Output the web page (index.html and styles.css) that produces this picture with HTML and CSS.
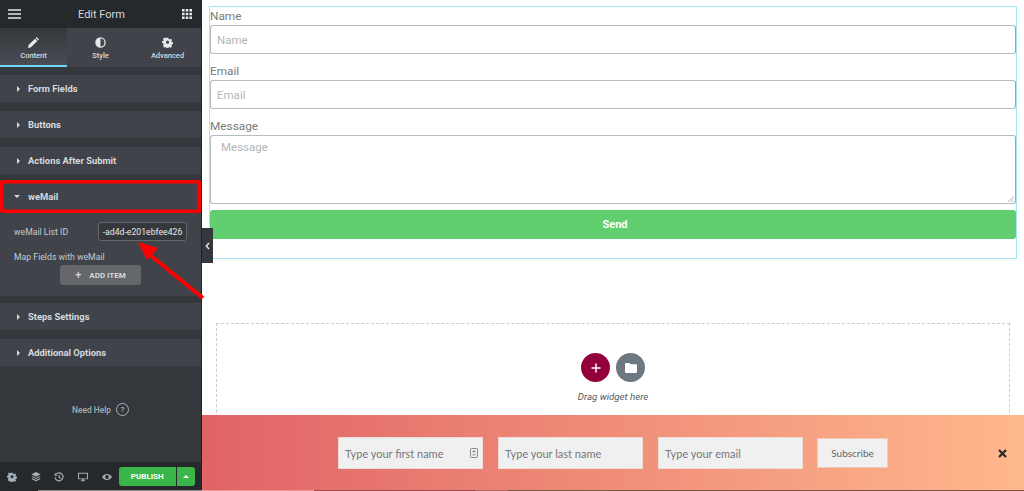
FILE: index.html
```html
<!DOCTYPE html>
<html lang="en">
<head>
<meta charset="utf-8">
<title>Edit Form</title>
<link rel="stylesheet" href="styles.css">
</head>
<body>
<div class="app">
  <aside class="panel">
    <header class="panel-head">
      <svg class="head-icon" viewBox="0 0 13 10"><path d="M0 1h13M0 5h13M0 9h13" stroke="#e6e8ea" stroke-width="1.6"/></svg>
      <span class="head-title">Edit Form</span>
      <svg class="head-icon grid" viewBox="0 0 10 10"><path fill="#e6e8ea" d="M0 0h2.6v2.6H0zM3.7 0h2.6v2.6H3.7zM7.4 0H10v2.6H7.4zM0 3.7h2.6v2.6H0zM3.7 3.7h2.6v2.6H3.7zM7.4 3.7H10v2.6H7.4zM0 7.4h2.6V10H0zM3.7 7.4h2.6V10H3.7zM7.4 7.4H10V10H7.4z"/></svg>
    </header>
    <nav class="tabs">
      <div class="tab active">
        <svg class="tab-icon" viewBox="0 0 12 12"><path fill="#e6e8ea" d="M0 12l.7-3.3L7.6 1.8l2.6 2.6-6.9 6.9zM8.3 1.1L9.4 0 12 2.6l-1.1 1.1z"/></svg>
        <span>Content</span>
      </div>
      <div class="tab">
        <svg class="tab-icon" viewBox="0 0 12 12"><circle cx="6" cy="6" r="5" fill="none" stroke="#e6e8ea" stroke-width="1.4"/><path fill="#e6e8ea" d="M6 1a5 5 0 0 0 0 10z"/></svg>
        <span>Style</span>
      </div>
      <div class="tab">
        <svg class="tab-icon" viewBox="0 0 12 12"><path fill="#e6e8ea" fill-rule="evenodd" d="M4.9.5h2.2l.3 1.6 1.1.5 1.4-.9 1.5 1.6-.9 1.3.5 1.1 1.5.3v2.2l-1.5.3-.5 1.1.9 1.4-1.5 1.5-1.4-.9-1.1.5-.3 1.5H4.9l-.3-1.5-1.1-.5-1.4.9L.6 9.6l.9-1.4-.5-1.1L-.5 6.8V4.6L1 4.3l.5-1.1-.9-1.3L2.1.3l1.4.9 1.1-.5zM6 3.9a1.9 1.9 0 1 0 0 3.8 1.9 1.9 0 0 0 0-3.8z" transform="translate(.5 .3) scale(.92)"/></svg>
        <span>Advanced</span>
      </div>
    </nav>
    <div class="sections">
      <div class="section"><i class="caret"></i>Form Fields</div>
      <div class="section"><i class="caret"></i>Buttons</div>
      <div class="section"><i class="caret"></i>Actions After Submit</div>
      <div class="section open"><i class="caret down"></i>weMail</div>
      <div class="section-body">
        <div class="field-row">
          <span>weMail List ID</span>
          <span class="id-input">-ad4d-e201ebfee426</span>
        </div>
        <div class="map-label">Map Fields with weMail</div>
        <button class="add-item"><b class="plus">+</b>ADD ITEM</button>
      </div>
      <div class="section"><i class="caret"></i>Steps Settings</div>
      <div class="section"><i class="caret"></i>Additional Options</div>
    </div>
    <div class="help">
      <span>Need Help</span>
      <span class="help-q">?</span>
    </div>
    <footer class="panel-foot">
      <svg class="foot-icon" viewBox="0 0 12 12"><path fill="#a4afb7" fill-rule="evenodd" d="M4.9.5h2.2l.3 1.6 1.1.5 1.4-.9 1.5 1.6-.9 1.3.5 1.1 1.5.3v2.2l-1.5.3-.5 1.1.9 1.4-1.5 1.5-1.4-.9-1.1.5-.3 1.5H4.9l-.3-1.5-1.1-.5-1.4.9L.6 9.6l.9-1.4-.5-1.1L-.5 6.8V4.6L1 4.3l.5-1.1-.9-1.3L2.1.3l1.4.9 1.1-.5zM6 3.9a1.9 1.9 0 1 0 0 3.8 1.9 1.9 0 0 0 0-3.8z" transform="translate(.5 .3) scale(.92)"/></svg>
      <svg class="foot-icon" viewBox="0 0 12 12"><path fill="#a4afb7" d="M6 0l5.5 2.8L6 5.6.5 2.800zM1.800 5L6 7.100 10.200 5l1.300.7L6 8.500.5 5.700zM1.800 7.600L6 9.700l4.200-2.100 1.300.7L6 11.100.5 8.300z"/></svg>
      <svg class="foot-icon" viewBox="0 0 12 12"><path fill="none" stroke="#a4afb7" stroke-width="1.500" d="M2.500 2.500A4.800 4.800 0 1 1 1.300 6.500M6.200 3.500v3l2 1.200"/><path fill="#a4afb7" d="M.8 1v3.500h3.500z"/></svg>
      <svg class="foot-icon" viewBox="0 0 12 12"><path fill="#a4afb7" d="M0 1h12v7.800H0zM1.200 2.100v5.600h9.600V2.100zM4.800 8.800h2.400v1.400h1.500v1H3.300v-1h1.500z"/></svg>
      <svg class="foot-icon" viewBox="0 0 12 12"><path fill="#a4afb7" fill-rule="evenodd" d="M0 6c1.500-2.400 3.500-3.600 6-3.600S10.500 3.600 12 6c-1.500 2.400-3.500 3.600-6 3.600S1.500 8.400 0 6zm6-2.300a2.300 2.300 0 1 0 0 4.600 2.300 2.300 0 0 0 0-4.600z"/></svg>
      <div class="publish">
        <span class="publish-main">PUBLISH</span>
        <span class="publish-more"><i class="caret-up"></i></span>
      </div>
    </footer>
  </aside>
  <main class="canvas">
    <form class="form-box">
      <div class="form-label">Name</div>
      <div class="form-input">Name</div>
      <div class="form-label">Email</div>
      <div class="form-input">Email</div>
      <div class="form-label">Message</div>
      <div class="form-input area">Message
        <svg class="grip" viewBox="0 0 8 8"><path d="M8 1L1 8M8 4L4 8M8 7L7 8" stroke="#9a9a9a" stroke-width=".8"/></svg>
      </div>
      <div class="send">Send</div>
    </form>
    <section class="drop">
      <div class="drop-btns">
        <span class="round add"><svg viewBox="0 0 10 10"><path d="M5 .5v9M.5 5h9" stroke="#fff" stroke-width="1.500"/></svg></span>
        <span class="round folder"><svg viewBox="0 0 12 10"><path fill="#fff" d="M1 0h3.500l1.200 1.300H11a1 1 0 0 1 1 1V9a1 1 0 0 1-1 1H1a1 1 0 0 1-1-1V1a1 1 0 0 1 1-1z"/></svg></span>
      </div>
      <div class="drop-text">Drag widget here</div>
    </section>
  </main>
  <div class="banner">
    <div class="sub-input">Type your first name
      <svg class="contact" viewBox="0 0 8 10"><rect x=".5" y=".5" width="7" height="9" rx=".8" fill="none" stroke="#8a8a8a"/><path d="M2.500 3.500h3M2.500 6.800h3M4 2v3" stroke="#8a8a8a"/></svg>
    </div>
    <div class="sub-input">Type your last name</div>
    <div class="sub-input">Type your email</div>
    <div class="sub-btn">Subscribe</div>
    <svg class="close" viewBox="0 0 9 9"><path d="M1 1l7 7M8 1L1 8" stroke="#26292c" stroke-width="2.200"/></svg>
  </div>
  <div class="collapse">
    <svg viewBox="0 0 5 8"><path d="M4 1L1.300 4 4 7" fill="none" stroke="#e6e8ea" stroke-width="1.400"/></svg>
  </div>
  <svg class="arrow" viewBox="0 0 70 62"><path d="M15 17L68 60" stroke="#f00" stroke-width="4"/><path fill="#f00" d="M3 4l9 18 11-12z"/></svg>
  <div class="edge"></div>
</div>
</body>
</html>
```
FILE: styles.css
```css
html, body { margin: 0; padding: 0; height: 100%; overflow: hidden; background: #fff; }
.app { position: relative; display: flex; width: 1024px; height: 491px; overflow: hidden; font-family: Roboto, "Liberation Sans", sans-serif; }

.panel { width: 201px; flex: none; display: flex; flex-direction: column; background: #34383c; color: #e6e8ea; border-right: 1px solid #222; }
.panel-head { height: 28px; flex: none; display: flex; align-items: center; justify-content: space-between; padding: 0 9px 0 8px; background: #26292c; }
.head-icon { width: 13px; height: 10px; }
.head-icon.grid { width: 10px; height: 10px; }
.head-title { font-size: 11px; font-weight: 400; color: #d5dadf; }

.tabs { height: 39px; flex: none; display: flex; box-sizing: border-box; }
.tab { flex: 1; display: flex; flex-direction: column; align-items: center; padding-top: 9px; gap: 3px; font-size: 7.5px; font-weight: 500; color: #d5dadf; background: #404349; box-sizing: border-box; }
.tab.active { background: linear-gradient(#34383c, #494d54); border-bottom: 2px solid #71d7f7; }
.tab-icon { width: 11px; height: 11px; }

.sections { display: flex; flex-direction: column; padding-top: 8px; }
.section { height: 27px; margin-bottom: 9px; display: flex; align-items: center; padding-left: 17px; background: #404349; font-size: 9.4px; font-weight: 700; color: #d5dadf; }
.section.open { position: relative; z-index: 1; height: 33px; margin: -3px 0; padding-left: 14px; border-radius: 2px; box-shadow: inset 0 0 0 3.5px #f00; }
.caret { width: 0; height: 0; margin-right: 8px; border-left: 3px solid #d5dadf; border-top: 3px solid transparent; border-bottom: 3px solid transparent; }
.caret.down { margin-right: 8px; border-top: 3px solid #d5dadf; border-left: 3px solid transparent; border-right: 3px solid transparent; border-bottom: 0; }
.section-body { height: 93px; padding: 12px 14px 0; background: #404349; box-sizing: border-box; font-size: 8.7px; color: #c2cbd2; border-bottom: 7px solid #34383c; }
.field-row { display: flex; justify-content: space-between; align-items: center; height: 19px; }
.id-input { width: 89px; height: 19px; box-sizing: border-box; display: flex; align-items: center; justify-content: center; border: 1px solid #64666a; border-radius: 3px; background: #34383c; color: #e6e8ea; }
.map-label { margin-top: 11px; line-height: 11px; }
.add-item { display: flex; align-items: center; justify-content: center; gap: 8px; width: 81px; height: 20px; margin: 2px 0 0 46px; padding: 0; border: 0; border-radius: 3px; background: #64666a; color: #d5dadf; font: 700 8px Roboto, sans-serif; }
.plus { font-size: 11px; font-weight: 500; line-height: 10px; }

.help { flex: 1; display: flex; align-items: center; justify-content: center; gap: 5px; padding-bottom: 18px; font-size: 8.4px; font-weight: 500; color: #a4afb7; }
.help-q { width: 11px; height: 11px; display: flex; align-items: center; justify-content: center; border: 1px solid #a4afb7; border-radius: 50%; font-size: 8px; }

.panel-foot { height: 29px; flex: none; display: flex; align-items: center; padding: 0 0 0 7px; background: #26292c; box-sizing: border-box; }
.foot-icon { width: 10px; height: 10px; margin-right: 13.7px; flex: none; }
.foot-icon:nth-child(5) { margin-right: 7px; }
.publish { display: flex; height: 19px; gap: 1px; color: #fff; font-size: 8px; font-weight: 700; }
.publish-main { width: 57px; display: flex; align-items: center; justify-content: center; background: #39b54a; border-radius: 3px 0 0 3px; }
.publish-more { width: 18px; display: flex; align-items: center; justify-content: center; background: #39b54a; border-radius: 0 3px 3px 0; }
.caret-up { width: 0; height: 0; border: 3px solid transparent; border-bottom-color: #fff; border-top: 0; }

.canvas { flex: 1; min-width: 0; padding: 6px 7px 0; }
.form-box { height: 253px; box-sizing: border-box; border: 1px solid #a4e6f7; display: flex; flex-direction: column; color: #7a7a7a; }
.form-label { height: 18px; padding-top: 1px; box-sizing: border-box; font-size: 11.8px; line-height: 16px; color: #7a7a7a; }
.form-input { height: 29px; margin-bottom: 8px; box-sizing: border-box; padding: 1px 0 0 6px; display: flex; align-items: center; border: 1px solid #b4bcc2; border-right-color: #6fb5c4; border-radius: 3px; font-size: 11.5px; color: #b5b5b5; }
.form-input.area { position: relative; height: 69px; margin-bottom: 6px; padding: 4px 10px; align-items: flex-start; }
.grip { position: absolute; right: 1px; bottom: 1px; width: 7px; height: 7px; }
.send { height: 29px; display: flex; align-items: center; justify-content: center; padding-left: 4px; background: #61ce70; border-radius: 3px; color: #fff; font-size: 11px; font-weight: 700; }

.drop { height: 130px; margin: 64px 7px 0; box-sizing: border-box; border: 1px dashed #c5ccd2; display: flex; flex-direction: column; align-items: center; padding-top: 29px; }
.drop-btns { display: flex; gap: 6px; }
.round { width: 29px; height: 29px; border-radius: 50%; display: flex; align-items: center; justify-content: center; }
.round.add { background: #93003c; }
.round.add svg { width: 10px; height: 10px; }
.round.folder { background: #6d7882; }
.round.folder svg { width: 12px; height: 10px; }
.drop-text { margin-top: 9px; font-size: 9.7px; font-style: italic; color: #54595f; }

.banner { position: absolute; left: 202px; right: 0; bottom: 0; height: 76px; display: flex; align-items: center; padding-left: 136px; gap: 15px; box-sizing: border-box; background: linear-gradient(90deg, #e06366, #ffb88c); font-family: Lato, "Open Sans", sans-serif; }
.sub-input { position: relative; width: 145px; height: 32px; box-sizing: border-box; padding-left: 6px; display: flex; align-items: center; background: #f0f0f0; border: 1px solid #eedcd6; font-size: 11px; color: #777; }
.contact { position: absolute; right: 4px; top: 10px; width: 8px; height: 10px; }
.sub-btn { width: 71px; height: 30px; margin-left: -1px; display: flex; align-items: center; justify-content: center; box-sizing: border-box; background: #f0f0f0; border: 1px solid #f3c9b6; font-size: 10px; color: #666; }
.close { position: absolute; right: 17px; top: 34px; width: 9px; height: 9px; }

.collapse { position: absolute; left: 202px; top: 228px; width: 11px; height: 35px; display: flex; align-items: center; justify-content: center; background: #34383c; }
.collapse svg { width: 5px; height: 8px; }
.arrow { position: absolute; left: 135px; top: 238px; width: 70px; height: 62px; }
.edge { position: absolute; left: 0; right: 0; bottom: 0; height: 1px; background: linear-gradient(90deg, #26292c 38px, #8a8a8a 38px, #8a8a8a 201px, #e89a9a 201px, #e89a9a 314px, #9a4a4a 314px, #9a4a4a 475px, #a86a60 475px, #a86a60 508px, #7a5546 508px); }
```
